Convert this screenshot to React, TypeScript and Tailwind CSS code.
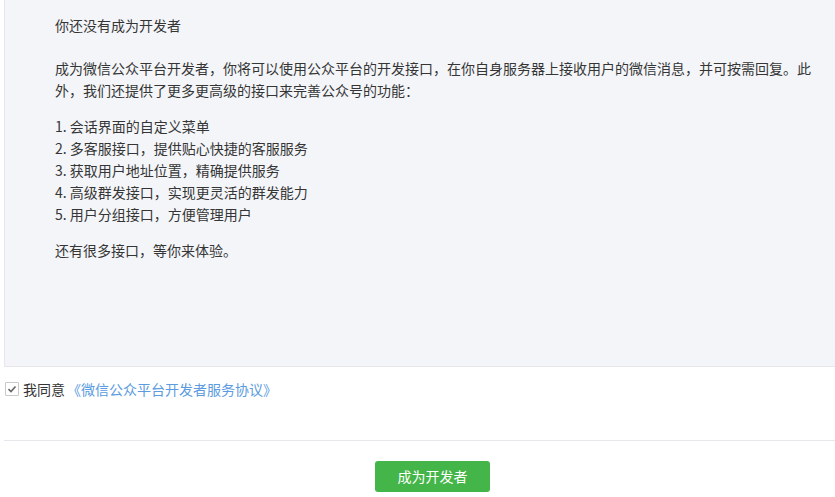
import React from "react";

export default function App() {
  const items = [
    "1. 会话界面的自定义菜单",
    "2. 多客服接口，提供贴心快捷的客服服务",
    "3. 获取用户地址位置，精确提供服务",
    "4. 高级群发接口，实现更灵活的群发能力",
    "5. 用户分组接口，方便管理用户",
  ];
  return (
    <div
      className="w-[835px] h-[497px] bg-white overflow-hidden text-[14px] text-[#353535]"
      style={{ fontFamily: '"Noto Sans CJK SC", "Noto Sans", sans-serif' }}
    >
      <div className="ml-[4px] h-[367px] bg-[#f4f5f9] border-l border-b border-[#e7e7eb] pt-[14px] pl-[50px] pr-[10px] leading-[22px]">
        <p>你还没有成为开发者</p>
        <p className="mt-[21px]">
          成为微信公众平台开发者，你将可以使用公众平台的开发接口，在你自身服务器上接收用户的微信消息，并可按需回复。此外，我们还提供了更多更高级的接口来完善公众号的功能：
        </p>
        <ul className="mt-[14px]">
          {items.map((t) => (
            <li key={t}>{t}</li>
          ))}
        </ul>
        <p className="mt-[14px]">还有很多接口，等你来体验。</p>
      </div>

      <div className="ml-[5px] mt-[11px] flex items-center h-[22px] leading-[22px]">
        <span className="w-[14px] h-[14px] border border-[#c9c9c9] bg-white flex items-center justify-center rounded-[1px]">
          <svg width="10" height="10" viewBox="0 0 10 10">
            <path d="M1.5 5.2 L4 7.5 L8.5 2.5" fill="none" stroke="#666" strokeWidth="1.6" />
          </svg>
        </span>
        <span className="ml-[4px]">我同意</span>
        <a className="ml-[2px] text-[#5b9be0]">《微信公众平台开发者服务协议》</a>
      </div>

      <div className="ml-[4px] mt-[40px] border-t border-[#e7e7eb]" />

      <div className="pl-[375px] pt-[20px]">
        <button className="w-[115px] h-[31px] rounded-[3px] bg-[#44b549] text-white text-[14px] leading-[31px]">
          成为开发者
        </button>
      </div>
    </div>
  );
}
